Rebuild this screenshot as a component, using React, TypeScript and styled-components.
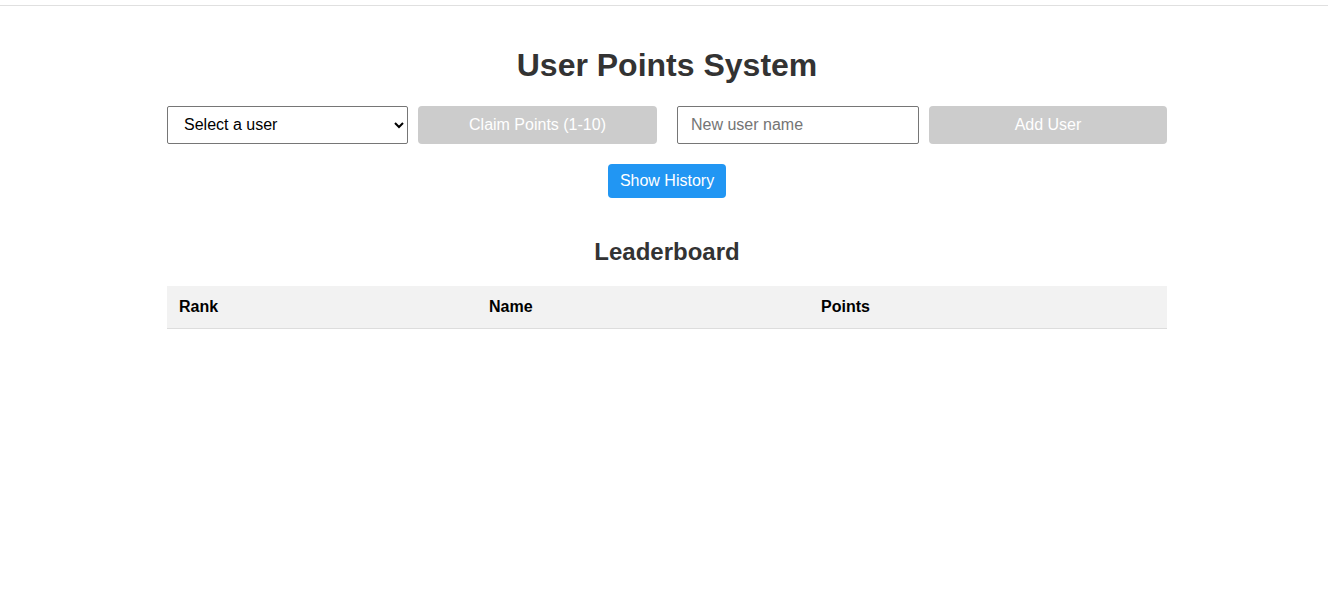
import styled, { createGlobalStyle } from 'styled-components';

const GlobalStyle = createGlobalStyle`
  body {
    margin: 0;
    font-family: "Liberation Sans", Arial, sans-serif;
    background: #fff;
  }
`;

const TopBar = styled.div`
  height: 5px;
  border-bottom: 1px solid #e0e0e0;
`;

const Page = styled.div`
  padding-left: 6px;
`;

const Container = styled.div`
  width: 1000px;
  margin: 0 auto;
  padding-top: 20px;
`;

const Title = styled.h1`
  font-size: 32px;
  font-weight: 700;
  color: #333;
  text-align: center;
  margin: 21px 0 22px;
`;

const Controls = styled.div`
  display: flex;
  gap: 20px;
`;

const Group = styled.div`
  flex: 1;
  display: flex;
  gap: 10px;
`;

const Select = styled.select`
  width: 241px;
  height: 38px;
  padding: 7px 12px 9px;
  font-size: 16px;
  font-family: "Liberation Sans", Arial, sans-serif;
  color: #000;
  background: #fff;
  border: 1px solid #767676;
  border-radius: 2px;
`;

const Input = styled.input`
  width: 242px;
  height: 38px;
  box-sizing: border-box;
  padding: 8px 13px;
  font-size: 16px;
  font-family: "Liberation Sans", Arial, sans-serif;
  border: 1px solid #767676;
  border-radius: 2px;
  &::placeholder {
    color: #757575;
  }
`;

const Button = styled.button<{ $primary?: boolean }>`
  font-family: "Liberation Sans", Arial, sans-serif;
  font-size: 16px;
  color: #fff;
  border: none;
  border-radius: 4px;
  background: ${(p) => (p.$primary ? '#2196f3' : '#cccccc')};
  cursor: ${(p) => (p.$primary ? 'pointer' : 'not-allowed')};
`;

const WideButton = styled(Button)`
  flex: 1;
  min-width: 0;
  height: 38px;
`;

const HistoryRow = styled.div`
  display: flex;
  justify-content: center;
  margin-top: 20px;
  margin-bottom: 20px;
`;

const HistoryButton = styled(Button)`
  height: 34px;
  padding: 0 12px;
`;

const SubTitle = styled.h2`
  font-size: 24px;
  font-weight: 700;
  color: #333;
  text-align: center;
  margin: 40px 0 20px;
  line-height: 28px;
`;

const Table = styled.table`
  width: 100%;
  border-collapse: collapse;
  table-layout: fixed;
`;

const Th = styled.th`
  text-align: left;
  background: #f2f2f2;
  padding: 12px;
  height: 42px;
  box-sizing: border-box;
  font-size: 16px;
  font-weight: 700;
  color: #000;
  border-bottom: 1px solid #ddd;
`;

const App: React.FC = () => {
  return (
    <>
      <GlobalStyle />
      <TopBar />
      <Page>
        <Container>
          <Title>User Points System</Title>
          <Controls>
            <Group>
              <Select defaultValue="">
                <option value="">Select a user</option>
              </Select>
              <WideButton disabled>Claim Points (1-10)</WideButton>
            </Group>
            <Group>
              <Input placeholder="New user name" />
              <WideButton disabled>Add User</WideButton>
            </Group>
          </Controls>
          <HistoryRow>
            <HistoryButton $primary>Show History</HistoryButton>
          </HistoryRow>
          <SubTitle>Leaderboard</SubTitle>
          <Table>
            <colgroup>
              <col style={{ width: 310 }} />
              <col style={{ width: 332 }} />
              <col style={{ width: 358 }} />
            </colgroup>
            <thead>
              <tr>
                <Th>Rank</Th>
                <Th>Name</Th>
                <Th>Points</Th>
              </tr>
            </thead>
            <tbody />
          </Table>
        </Container>
      </Page>
    </>
  );
};

export default App;
